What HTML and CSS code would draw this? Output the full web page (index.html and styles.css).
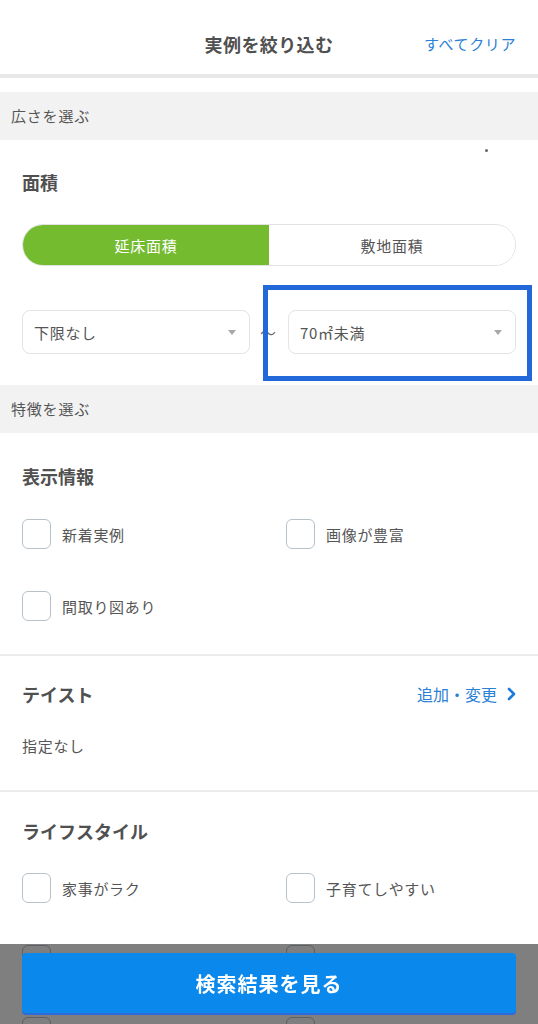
FILE: index.html
```html
<!DOCTYPE html>
<html lang="ja">
<head>
<meta charset="utf-8">
<title>実例を絞り込む</title>
<link rel="stylesheet" href="styles.css">
</head>
<body>
<header class="header">
  <div></div>
  <h1 class="header-title">実例を絞り込む</h1>
  <a class="header-clear">すべてクリア</a>
</header>
<div class="header-gap"></div>

<div class="section-bar">広さを選ぶ</div>

<section class="block block-area">
  <span class="speck"></span>
  <h2 class="block-title">面積</h2>
  <div class="segment">
    <div class="segment-item is-active">延床面積</div>
    <div class="segment-item">敷地面積</div>
  </div>
  <div class="range">
    <div class="select">
      <span class="select-text">下限なし</span>
      <span class="select-arrow"></span>
    </div>
    <div class="range-sep">〜</div>
    <div class="select select-focused">
      <span class="select-text">70㎡未満</span>
      <span class="select-arrow"></span>
      <span class="focus-ring"></span>
    </div>
  </div>
</section>

<div class="section-bar">特徴を選ぶ</div>

<section class="block block-display">
  <h2 class="block-title">表示情報</h2>
  <div class="checks">
    <label class="check"><span class="check-box"></span><span class="check-label">新着実例</span></label>
    <label class="check"><span class="check-box"></span><span class="check-label">画像が豊富</span></label>
    <label class="check"><span class="check-box"></span><span class="check-label">間取り図あり</span></label>
  </div>
</section>
<div class="divider"></div>

<section class="block block-taste">
  <div class="block-head">
    <h2 class="block-title">テイスト</h2>
    <a class="more-link">追加・変更
      <svg class="chev" width="9" height="14" viewBox="0 0 9 14"><polyline points="2,2 7,7 2,12" fill="none" stroke="currentColor" stroke-width="2.6" stroke-linecap="round" stroke-linejoin="round"/></svg>
    </a>
  </div>
  <p class="taste-value">指定なし</p>
</section>
<div class="divider"></div>

<section class="block block-life">
  <h2 class="block-title">ライフスタイル</h2>
  <div class="checks">
    <label class="check"><span class="check-box"></span><span class="check-label">家事がラク</span></label>
    <label class="check"><span class="check-box"></span><span class="check-label">子育てしやすい</span></label>
    <label class="check"><span class="check-box"></span><span class="check-label">収納が充実</span></label>
    <label class="check"><span class="check-box"></span><span class="check-label">趣味を楽しむ</span></label>
    <label class="check" aria-label="ペットと暮らす"><span class="check-box"></span></label>
    <label class="check" aria-label="二世帯住宅"><span class="check-box"></span></label>
  </div>
</section>

<footer class="footer">
  <button class="search-btn">検索結果を見る</button>
</footer>
</body>
</html>
```

FILE: styles.css
```css
* { box-sizing: border-box; }
html, body { margin: 0; padding: 0; }
body {
  width: 538px;
  background: #fff;
  font-family: "Noto Sans CJK JP", "Noto Sans", sans-serif;
  color: #555;
  padding-bottom: 120px;
}
h1, h2, p { margin: 0; }
a { text-decoration: none; }

.header {
  height: 78px;
  padding-top: 14px;
  display: grid;
  grid-template-columns: 1fr auto 1fr;
  align-items: center;
  border-bottom: 4px solid #e8e8e8;
}
.header > * { height: 60px; line-height: 60px; }
.header-title {
  font-size: 18px;
  font-weight: 700;
  color: #505050;
  letter-spacing: 0.4px;
}
.header-clear {
  justify-self: end;
  padding-right: 22px;
  font-size: 15px;
  letter-spacing: 0.6px;
  color: #2a80d6;
}
.header-gap { height: 14px; }

.section-bar {
  height: 48px;
  line-height: 48px;
  padding-left: 11px;
  background: #f2f2f2;
  font-size: 15px;
  letter-spacing: 0.8px;
  color: #555;
}

.block { padding: 0 22px; position: relative; }
.block-title {
  font-size: 18px;
  font-weight: 700;
  line-height: 26px;
  color: #505050;
}

.block-area { padding-top: 29px; padding-bottom: 31px; }
.speck {
  position: absolute;
  top: 9px;
  left: 485px;
  width: 3px;
  height: 3px;
  border-radius: 50%;
  background: #666;
}
.segment {
  margin-top: 29px;
  height: 42px;
  display: grid;
  grid-template-columns: 1fr 1fr;
  border: 1.5px solid #e2e2e2;
  border-radius: 21px;
  overflow: hidden;
}
.segment-item {
  display: flex;
  align-items: center;
  justify-content: center;
  font-size: 15px;
  letter-spacing: 0.7px;
  color: #555;
  background: #fff;
}
.segment-item.is-active { background: #74bb2f; color: #fff; }

.range {
  margin-top: 44px;
  display: grid;
  grid-template-columns: 228px 38px 228px;
  align-items: center;
}
.select {
  position: relative;
  height: 44px;
  border: 1.5px solid #e4e4e4;
  border-radius: 8px;
  display: flex;
  align-items: center;
  justify-content: space-between;
  padding: 0 13px 0 11px;
}
.select-text { font-size: 15px; letter-spacing: 0.7px; color: #555; }
.select-arrow {
  width: 0; height: 0;
  border-left: 4.5px solid transparent;
  border-right: 4.5px solid transparent;
  border-top: 5px solid #a8a8a8;
}
.range-sep {
  text-align: center;
  font-size: 16px;
  color: #6a6a6a;
  padding-right: 2px;
}
.focus-ring {
  position: absolute;
  top: -26px;
  left: -26px;
  right: -17px;
  bottom: -28px;
  border: 5px solid #2368d9;
  pointer-events: none;
}

.block-display { padding-top: 30px; padding-bottom: 33px; }
.checks {
  margin-top: 30px;
  display: grid;
  grid-template-columns: 264px 1fr;
  row-gap: 42px;
}
.check { display: flex; align-items: center; gap: 11px; height: 30px; }
.check-box {
  width: 29px;
  height: 30px;
  border: 1.5px solid #b6c2ca;
  border-radius: 6px;
  background: #fff;
  flex: none;
}
.check-label { font-size: 15px; letter-spacing: 0.7px; color: #555; }

.divider { height: 2px; background: #ebebeb; }

.block-taste { padding-top: 25px; padding-bottom: 33px; }
.block-head { display: flex; align-items: center; justify-content: space-between; }
.more-link {
  display: flex;
  align-items: center;
  gap: 10px;
  font-size: 16px;
  color: #2a80d6;
}
.chev { color: #1b7bdc; display: block; }
.taste-value {
  margin-top: 28px;
  font-size: 15px;
  line-height: 22px;
  letter-spacing: 0.7px;
  color: #555;
}

.block-life { padding-top: 26px; }
.block-life .checks { margin-top: 29px; }

.footer {
  position: fixed;
  left: 0;
  bottom: 0;
  width: 538px;
  height: 80px;
  padding: 9px 22px 0;
  background: rgba(0, 0, 0, 0.5);
}
.search-btn {
  width: 100%;
  height: 60px;
  border: 0;
  border-radius: 4px;
  background: #0a88ec;
  box-shadow: 0 2px 0 #2e6bd6;
  color: #fff;
  font-family: inherit;
  font-size: 20px;
  font-weight: 700;
  letter-spacing: 1px;
}
```
